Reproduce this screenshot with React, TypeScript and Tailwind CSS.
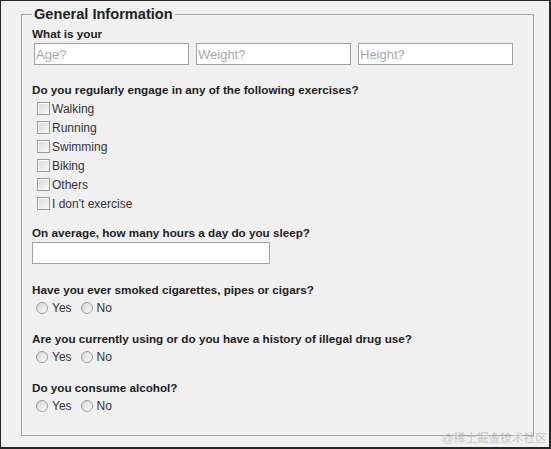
import React from 'react';

const exercises = ['Walking', 'Running', 'Swimming', 'Biking', 'Others', "I don't exercise"];

const yesNoQuestions = [
  'Have you ever smoked cigarettes, pipes or cigars?',
  'Are you currently using or do you have a history of illegal drug use?',
  'Do you consume alcohol?',
];

function Checkbox({ label }: { label: string }) {
  return (
    <label className="flex h-[19px] items-center">
      <span className="ml-[5px] h-[13px] w-[13px] border border-[#9a9a9a] bg-gradient-to-br from-[#d6d6d6] to-[#fbfbfb] shadow-[inset_1px_1px_0_#ffffff]"></span>
      <span className="ml-[2px] text-[12px] text-[#333]">{label}</span>
    </label>
  );
}

function Radio({ label }: { label: string }) {
  return (
    <label className="flex h-[17px] items-center">
      <span className="h-[12px] w-[12px] rounded-full border border-[#9a9a9a] bg-gradient-to-br from-[#d4d4d4] to-[#fdfdfd]"></span>
      <span className="ml-[4px] text-[12px] text-[#333]">{label}</span>
    </label>
  );
}

function TextBox({ placeholder, width }: { placeholder?: string; width: string }) {
  return (
    <input
      className={`${width} block h-[22px] border border-[#a0a0a0] bg-white pl-[1px] text-[13px] text-[#333] placeholder:text-[#a8a8a8] outline-none`}
      placeholder={placeholder}
    />
  );
}

export default function App() {
  return (
    <div
      className="relative h-[449px] w-[551px] overflow-hidden border-t border-l border-r-2 border-b-2 border-[#262626] bg-[#f0f0f0]"
      style={{ fontFamily: '"Liberation Sans", Arial, sans-serif' }}
    >
      <fieldset className="ml-[20px] mt-[5px] w-[513px] border border-[#a3a3a3] px-[10px] pt-[2px] pb-[21px]">
        <legend className="px-[2px] text-[14.6px] font-bold leading-[16px] text-[#222]">
          General Information
        </legend>

        {/* measurements */}
        <div className="text-[11.7px] font-bold leading-[19px] text-[#222]">What is your</div>
        <div className="ml-[2px] flex gap-[7px]">
          <TextBox placeholder="Age?" width="w-[155px]" />
          <TextBox placeholder="Weight?" width="w-[155px]" />
          <TextBox placeholder="Height?" width="w-[155px]" />
        </div>

        {/* exercises */}
        <div className="mt-[15px] text-[11.7px] font-bold leading-[19px] text-[#222]">
          Do you regularly engage in any of the following exercises?
        </div>
        <div className="flex flex-col">
          {exercises.map((e) => (
            <Checkbox key={e} label={e} />
          ))}
        </div>

        {/* sleep */}
        <div className="mt-[10px] text-[11.7px] font-bold leading-[19px] text-[#222]">
          On average, how many hours a day do you sleep?
        </div>
        <TextBox width="w-[238px]" />

        {yesNoQuestions.map((q, i) => (
          <div key={q} className={i === 0 ? 'mt-[16px]' : 'mt-[13px]'}>
            <div className="text-[11.7px] font-bold leading-[19px] text-[#222]">{q}</div>
            <div className="ml-[4px] flex gap-[9px]">
              <Radio label="Yes" />
              <Radio label="No" />
            </div>
          </div>
        ))}
      </fieldset>

      <div
        className="absolute right-[2px] bottom-[0px] text-[11.7px] text-[#c4c4c4]"
        style={{ fontFamily: '"Liberation Sans", "Noto Sans CJK SC", sans-serif' }}
      >
        @稀土掘金技术社区
      </div>
    </div>
  );
}
